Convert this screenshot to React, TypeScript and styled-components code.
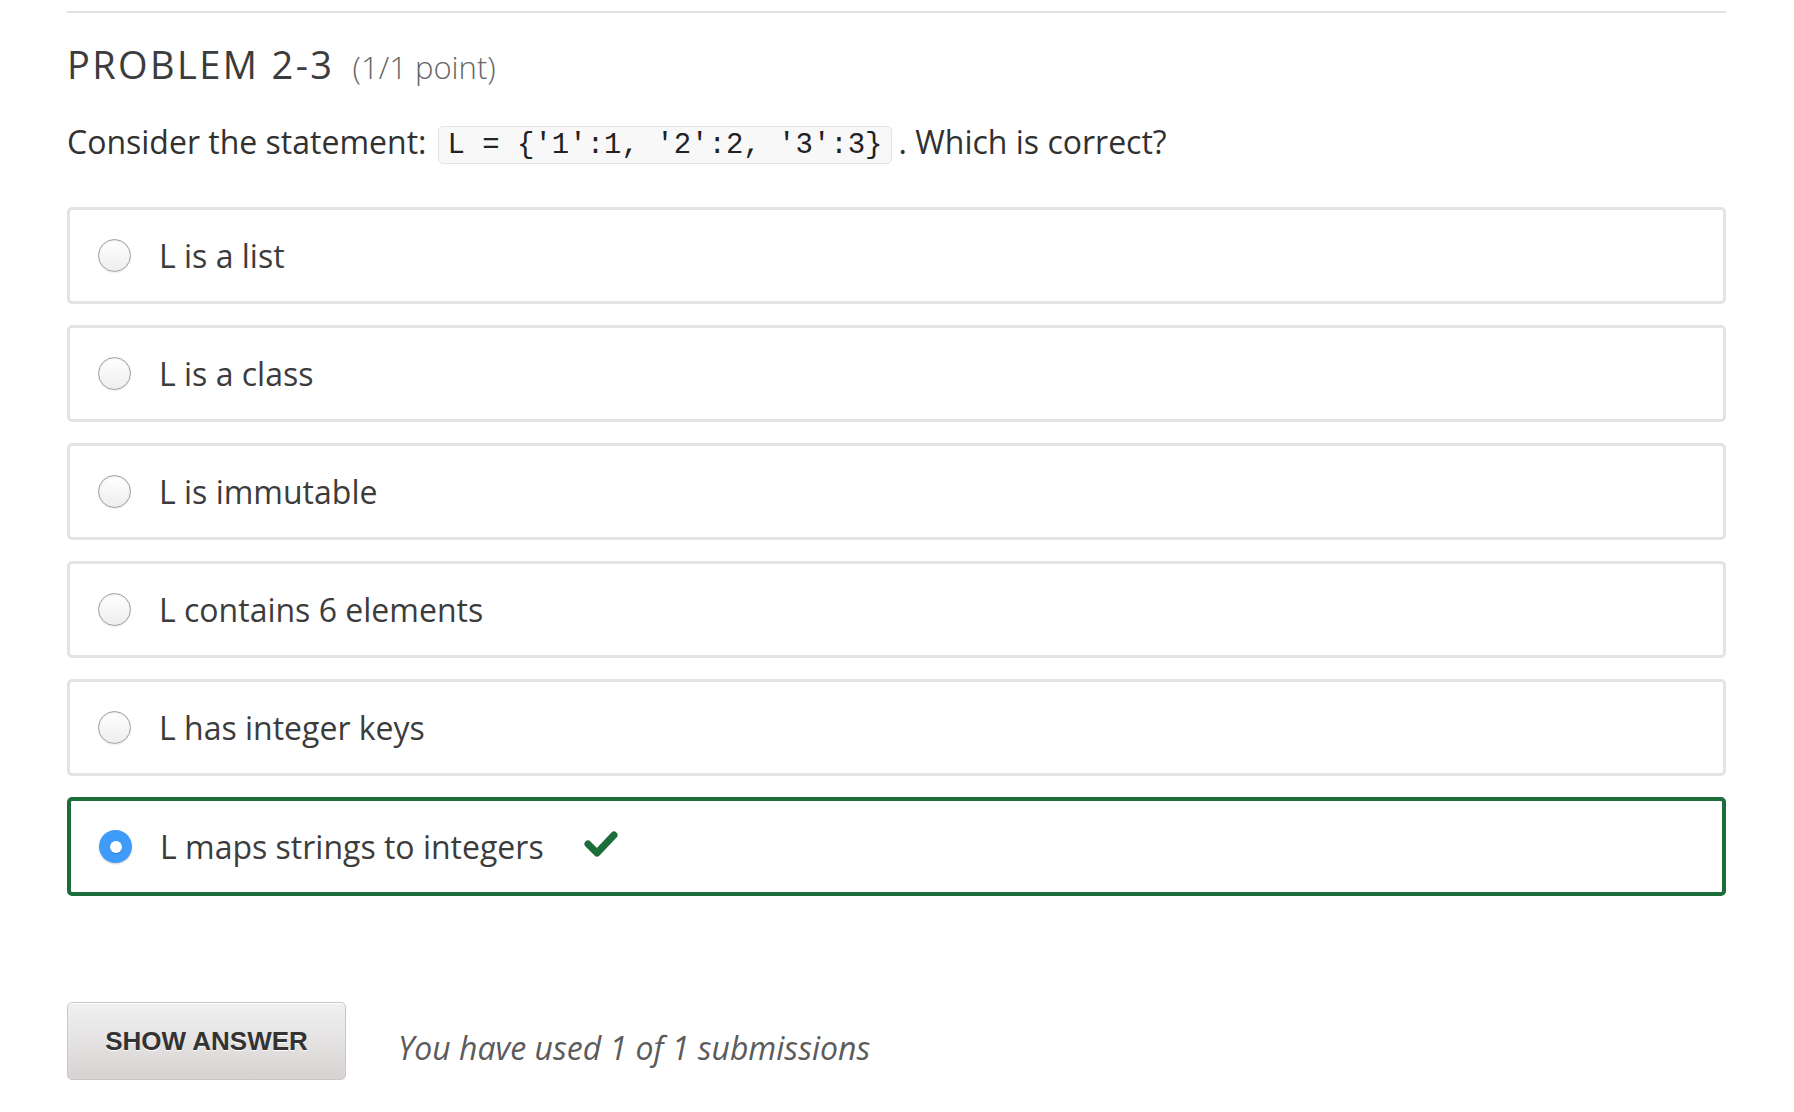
import styled, { createGlobalStyle } from "styled-components";

const GlobalStyle = createGlobalStyle`
  html, body {
    margin: 0;
    padding: 0;
    background: #fff;
  }
  body {
    font-family: "Open Sans", "Liberation Sans", sans-serif;
    color: #3c3c3c;
  }
`;

const Page = styled.div`
  padding: 11px 68px 0 67px;
`;

const Problem = styled.section`
  border-top: 2px solid #e1e1e1;
`;

const Heading = styled.h2`
  margin: 25px 0 0;
  font-size: 38px;
  line-height: 52px;
  font-weight: 400;
  letter-spacing: 2.4px;
  text-transform: uppercase;
  color: #3c3c3c;
`;

const Points = styled.span`
  margin-left: 18px;
  font-size: 31px;
  font-weight: 300;
  letter-spacing: 0;
  text-transform: none;
  color: #666;
`;

const Question = styled.p`
  margin: 27px 0 0;
  font-size: 32px;
  line-height: 44px;
  color: #313131;
`;

const Code = styled.code`
  display: inline-block;
  margin: 0 7px 0 12px;
  padding: 2px 8px 1px;
  border: 1px solid #e3e3e3;
  border-radius: 5px;
  background: #f8f8f8;
  font-family: "Liberation Mono", "Courier New", monospace;
  font-size: 29px;
  line-height: 33px;
  color: #222;
  vertical-align: 1px;
`;

const Choices = styled.div`
  margin-top: 43px;
  display: flex;
  flex-direction: column;
  gap: 21px;
`;

const Choice = styled.label<{ correct?: boolean }>`
  display: flex;
  align-items: center;
  gap: 28px;
  height: 91px;
  padding-left: 28px;
  border: ${(p) => (p.correct ? "4px solid #1d6d3a" : "3px solid #e3e3e3")};
  border-radius: 5px;
  font-size: 32px;
  color: #3c3c3c;
`;

const Radio = styled.span<{ checked?: boolean }>`
  box-sizing: border-box;
  width: 33px;
  height: 33px;
  flex: none;
  border-radius: 50%;
  display: flex;
  align-items: center;
  justify-content: center;
  border: ${(p) => (p.checked ? "none" : "1px solid #9e9e9e")};
  background: ${(p) =>
    p.checked ? "#3e9bfa" : "linear-gradient(#ffffff, #eeeeee)"};
  box-shadow: ${(p) =>
    p.checked
      ? "0 1px 2px rgba(0,0,0,0.2)"
      : "inset 0 1px 2px rgba(0,0,0,0.08), 0 1px 1px rgba(0,0,0,0.08)"};

  &::after {
    content: "";
    display: ${(p) => (p.checked ? "block" : "none")};
    width: 12px;
    height: 12px;
    border-radius: 50%;
    background: #fff;
    box-shadow: 0 1px 1px rgba(0, 0, 0, 0.2);
  }
`;

const Check = styled.svg`
  margin-left: 11px;
  margin-top: -5px;
`;

const Actions = styled.div`
  margin-top: 106px;
  display: flex;
  align-items: center;
  gap: 52px;
`;

const ShowButton = styled.button`
  width: 279px;
  height: 78px;
  border: 1px solid #cbc5c5;
  border-radius: 5px;
  background: linear-gradient(#f1f1f1, #d8d3d3);
  box-shadow: inset 0 1px 0 #fff;
  font-family: "Liberation Sans", Arial, sans-serif;
  font-weight: 700;
  font-size: 26px;
  color: #333;
  text-shadow: 0 1px 0 #fff;
  cursor: pointer;
`;

const Status = styled.span`
  margin-top: 12px;
  font-size: 32px;
  font-style: italic;
  color: #5b5b5b;
`;

const choices = [
  "L is a list",
  "L is a class",
  "L is immutable",
  "L contains 6 elements",
  "L has integer keys",
  "L maps strings to integers",
];

function App() {
  return (
    <Page>
      <GlobalStyle />
      <Problem>
        <Heading>
          Problem 2-3<Points>(1/1 point)</Points>
        </Heading>
        <Question>
          Consider the statement:<Code>{"L = {'1':1, '2':2, '3':3}"}</Code>. Which is correct?
        </Question>
        <Choices>
          {choices.map((text, i) => {
            const correct = i === choices.length - 1;
            return (
              <Choice key={text} correct={correct}>
                <Radio checked={correct} />
                <span>{text}</span>
                {correct && (
                  <Check width="36" height="28" viewBox="0 0 36 28">
                    <polyline
                      points="5,14 14,23 31,5"
                      fill="none"
                      stroke="#1d6d3a"
                      strokeWidth="7"
                      strokeLinecap="round"
                      strokeLinejoin="round"
                    />
                  </Check>
                )}
              </Choice>
            );
          })}
        </Choices>
        <Actions>
          <ShowButton>SHOW ANSWER</ShowButton>
          <Status>You have used 1 of 1 submissions</Status>
        </Actions>
      </Problem>
    </Page>
  );
}

export default App;
